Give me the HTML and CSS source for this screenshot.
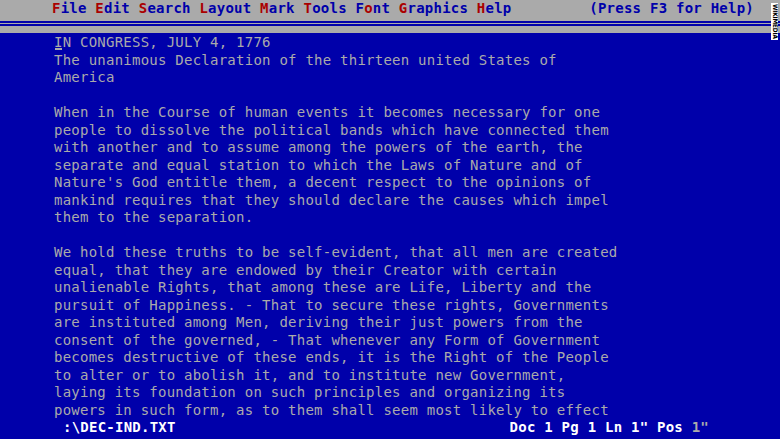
FILE: index.html
```html
<!DOCTYPE html>
<html lang="en">
<head>
<meta charset="utf-8">
<title>WordPerfect - DEC-IND.TXT</title>
<link rel="stylesheet" href="styles.css">
</head>
<body>
<div class="screen">
  <header class="menubar">
    <div class="menu-row">
      <nav class="menu"><span class="hk">F</span>ile <span class="hk">E</span>dit <span class="hk">S</span>earch <span class="hk">L</span>ayout <span class="hk">M</span>ark <span class="hk">T</span>ools F<span class="hk">o</span>nt <span class="hk">G</span>raphics <span class="hk">H</span>elp</nav>
      <span class="help">(Press F3 for Help)</span>
    </div>
    <div class="rule"></div>
  </header>
  <main class="doc">
<pre class="text">IN CONGRESS, JULY 4, 1776
The unanimous Declaration of the thirteen united States of
America

When in the Course of human events it becomes necessary for one
people to dissolve the political bands which have connected them
with another and to assume among the powers of the earth, the
separate and equal station to which the Laws of Nature and of
Nature's God entitle them, a decent respect to the opinions of
mankind requires that they should declare the causes which impel
them to the separation.

We hold these truths to be self-evident, that all men are created
equal, that they are endowed by their Creator with certain
unalienable Rights, that among these are Life, Liberty and the
pursuit of Happiness. - That to secure these rights, Governments
are instituted among Men, deriving their just powers from the
consent of the governed, - That whenever any Form of Government
becomes destructive of these ends, it is the Right of the People
to alter or to abolish it, and to institute new Government,
laying its foundation on such principles and organizing its
powers in such form, as to them shall seem most likely to effect</pre>
  </main>
  <footer class="status">
    <span class="file">:\DEC-IND.TXT</span>
    <span class="pos">Doc 1 Pg 1 Ln 1" Pos <span class="cur">1"</span></span>
  </footer>
  <div class="watermark">WIKIMEDIA</div>
</div>
</body>
</html>
```

FILE: styles.css
```css
html, body {
  margin: 0;
  padding: 0;
  background: #0000aa;
}

.screen {
  position: relative;
  width: 780px;
  height: 439px;
  overflow: hidden;
  background: #0000aa;
  font-family: "DejaVu Sans Mono", "Liberation Mono", monospace;
  font-size: 14px;
  line-height: 17.5px;
  letter-spacing: 0.24px;
}

.menubar {
  height: 33px;
  background: #aaaaaa;
}

.menu-row {
  display: flex;
  height: 21px;
  padding: 0 26px 0 52px;
  font-weight: bold;
  color: #0000aa;
}

.menu {
  white-space: pre;
}

.hk {
  color: #aa0000;
}

.help {
  margin-left: auto;
  white-space: pre;
}

.rule {
  height: 5px;
  box-sizing: border-box;
  border-top: 2px solid #0000aa;
  border-bottom: 2px solid #0000aa;
}

.doc {
  position: relative;
  padding: 1px 0 0 54px;
}

/* text cursor under the first character */
.doc::before {
  content: "";
  position: absolute;
  left: 55px;
  top: 15px;
  width: 7px;
  height: 2px;
  background: #aaaaaa;
}

.text {
  margin: 0;
  font: inherit;
  color: #aaaaaa;
  white-space: pre;
}

.status {
  display: flex;
  justify-content: space-between;
  height: 17.5px;
  padding: 0 71px 0 63px;
  color: #ffffff;
  font-weight: bold;
  white-space: pre;
}

.cur {
  color: #aaaaaa;
}

.watermark {
  position: absolute;
  top: 3px;
  right: 2px;
  width: 7px;
  padding: 1px 0;
  background: #ffffff;
  color: #000000;
  font-family: "DejaVu Sans Condensed", "DejaVu Sans", sans-serif;
  font-weight: bold;
  font-size: 6.4px;
  line-height: 7px;
  letter-spacing: -0.15px;
  writing-mode: vertical-rl;
  text-align: center;
}
```
